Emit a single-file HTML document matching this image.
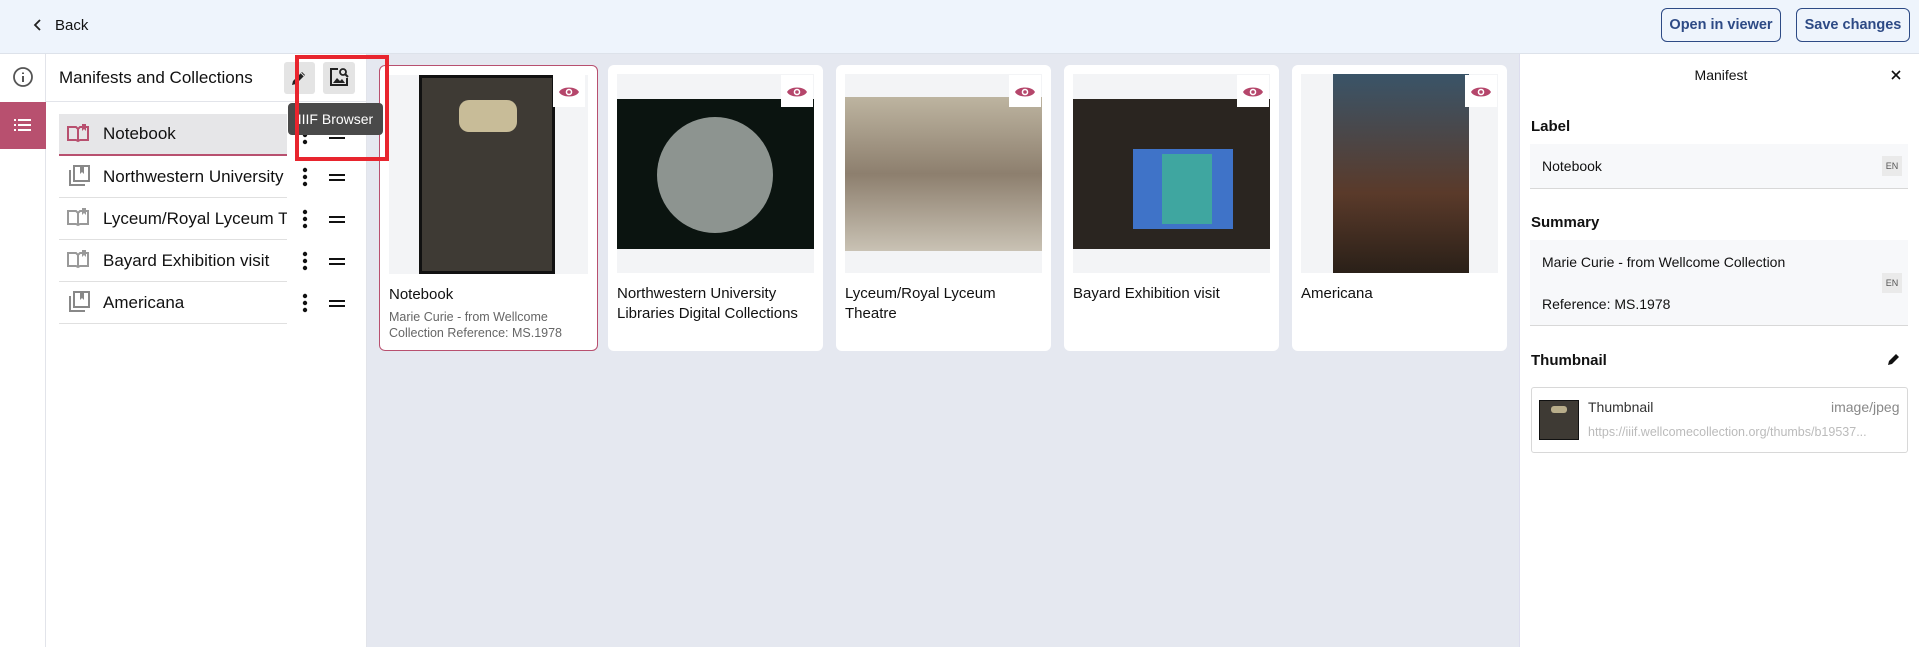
<!DOCTYPE html>
<html><head><meta charset="utf-8"><style>
*{box-sizing:border-box;margin:0;padding:0}
body{width:1919px;height:647px;overflow:hidden;font-family:"Liberation Sans",sans-serif;background:#fff;position:relative;color:#111}
.abs{position:absolute}
.hdr{left:0;top:0;width:1919px;height:54px;background:#eef4fc;border-bottom:1px solid #dde2ea}
.btn{top:8px;height:34px;border:1.5px solid #2d4a85;border-radius:6px;color:#2d4a85;font-weight:bold;font-size:14.5px;display:flex;align-items:center;justify-content:center}
.rail{left:0;top:54px;width:46px;height:593px;border-right:1px solid #e2e4ea}
.side{left:46px;top:54px;width:321px;height:593px;border-right:1px solid #e2e4ea}
.main{left:367px;top:54px;width:1152px;height:593px;background:#e5e8f0}
.right{left:1519px;top:54px;width:400px;height:593px;background:#fff;border-left:1px solid #dde}
.item{left:59px;width:228px;height:42px;border-bottom:1.5px solid #e0e0e0;font-size:17px;display:flex;align-items:center;padding-left:44px;white-space:nowrap;overflow:hidden}
.card{top:65px;width:215px;height:286px;background:#fff;border-radius:6px}
.imgbox{position:absolute;left:9px;top:9px;right:9px;height:199px;background:#f3f4f6;overflow:hidden}
.ct{position:absolute;left:9px;top:219px;right:20px;font-size:15px;line-height:20px}
.fld{left:1530px;width:378px;background:#f7f8fa;border-bottom:1.5px solid #d8d8d8;font-size:14px}
.en{position:absolute;right:6px;width:20px;height:20px;background:#eaeaea;font-size:9px;color:#555;display:flex;align-items:center;justify-content:center}
.lbl{left:1531px;font-size:15px;font-weight:bold}
</style></head><body>
<div class="abs hdr"></div>
<svg class="abs" style="left:33px;top:18px" width="10" height="14" viewBox="0 0 10 14"><path d="M7 2L2 7l5 5" stroke="#222" stroke-width="1.8" fill="none"/></svg>
<div class="abs" style="left:55px;top:17px;font-size:15px">Back</div>
<div class="abs btn" style="left:1661px;width:120px">Open in viewer</div>
<div class="abs btn" style="left:1796px;width:114px">Save changes</div>

<div class="abs rail"></div>
<svg class="abs" style="left:12px;top:66px" width="22" height="22" viewBox="0 0 22 22"><circle cx="11" cy="11" r="9" stroke="#555" stroke-width="1.8" fill="none"/><path d="M11 10v6M11 6.5v1.5" stroke="#555" stroke-width="2"/></svg>
<div class="abs" style="left:0;top:102px;width:46px;height:47px;background:#b8506f"></div>
<svg class="abs" style="left:13px;top:118px" width="20" height="14" viewBox="0 0 20 14"><g fill="#fff"><rect x="1" y="1" width="2" height="2"/><rect x="5" y="1" width="13" height="2"/><rect x="1" y="6" width="2" height="2"/><rect x="5" y="6" width="13" height="2"/><rect x="1" y="11" width="2" height="2"/><rect x="5" y="11" width="13" height="2"/></g></svg>

<div class="abs side"></div>
<div class="abs" style="left:46px;top:101px;width:321px;border-top:1px solid #e2e4ea"></div>
<div class="abs" style="left:59px;top:68px;font-size:17px">Manifests and Collections</div>
<div class="abs" style="left:284px;top:62px;width:31px;height:32px;background:#e4e4e4;border-radius:3px"></div>
<svg class="abs" style="left:289px;top:68px" width="20" height="20" viewBox="0 0 20 20"><path d="M3 17l1-4 9-9 3 3-9 9z" fill="#222"/><path d="M12 5l3 3" stroke="#e4e4e4" stroke-width="1"/></svg>
<div class="abs" style="left:323px;top:62px;width:32px;height:32px;background:#e4e4e4;border-radius:3px"></div>
<svg class="abs" style="left:328px;top:66px" width="22" height="22" viewBox="0 0 22 22"><path d="M10 3H3v16h16v-7" stroke="#222" stroke-width="2" fill="none"/><circle cx="15" cy="6" r="3" stroke="#222" stroke-width="1.8" fill="none"/><path d="M17 8l3 3" stroke="#222" stroke-width="2"/><path d="M5 17l4-5 3 3 2-2 3 4z" fill="#222"/></svg>

<div class="abs item" style="top:114px;background:#e6e6e8;border-bottom:2px solid #b8506f">Notebook</div>
<div class="abs item" style="top:156px">Northwestern University</div>
<div class="abs item" style="top:198px">Lyceum/Royal Lyceum Th</div>
<div class="abs item" style="top:240px">Bayard Exhibition visit</div>
<div class="abs item" style="top:282px">Americana</div>
<svg class="abs" style="left:66px;top:123px" width="24" height="20" viewBox="0 0 24 20"><path d="M2 4h8l2 2 2-2h8v13h-8l-2 1-2-1H2z" stroke="#b8506f" stroke-width="2" fill="none"/><path d="M12 6v11" stroke="#b8506f" stroke-width="2"/><path d="M16 1v7l2-2 2 2V1" fill="#b8506f"/></svg>
<svg class="abs" style="left:68px;top:165px" width="22" height="22" viewBox="0 0 22 22"><path d="M2 5v15h15" stroke="#888" stroke-width="2" fill="none"/><rect x="6" y="1" width="15" height="15" stroke="#888" stroke-width="2" fill="none"/><path d="M12 2v7l2-2 2 2V2" fill="#888"/></svg>
<svg class="abs" style="left:66px;top:207px" width="24" height="20" viewBox="0 0 24 20"><path d="M2 4h8l2 2 2-2h8v13h-8l-2 1-2-1H2z" stroke="#999" stroke-width="2" fill="none"/><path d="M12 6v11" stroke="#999" stroke-width="2"/><path d="M16 1v7l2-2 2 2V1" fill="#999"/></svg>
<svg class="abs" style="left:66px;top:249px" width="24" height="20" viewBox="0 0 24 20"><path d="M2 4h8l2 2 2-2h8v13h-8l-2 1-2-1H2z" stroke="#999" stroke-width="2" fill="none"/><path d="M12 6v11" stroke="#999" stroke-width="2"/><path d="M16 1v7l2-2 2 2V1" fill="#999"/></svg>
<svg class="abs" style="left:68px;top:291px" width="22" height="22" viewBox="0 0 22 22"><path d="M2 5v15h15" stroke="#888" stroke-width="2" fill="none"/><rect x="6" y="1" width="15" height="15" stroke="#888" stroke-width="2" fill="none"/><path d="M12 2v7l2-2 2 2V2" fill="#888"/></svg>
<svg class="abs" style="left:300px;top:123px" width="48" height="190" viewBox="0 0 48 190">
<g fill="#111">
<circle cx="5" cy="5" r="2.2"/><circle cx="5" cy="12" r="2.2"/><circle cx="5" cy="19" r="2.2"/>
<circle cx="5" cy="47" r="2.2"/><circle cx="5" cy="54" r="2.2"/><circle cx="5" cy="61" r="2.2"/>
<circle cx="5" cy="89" r="2.2"/><circle cx="5" cy="96" r="2.2"/><circle cx="5" cy="103" r="2.2"/>
<circle cx="5" cy="131" r="2.2"/><circle cx="5" cy="138" r="2.2"/><circle cx="5" cy="145" r="2.2"/>
<circle cx="5" cy="173" r="2.2"/><circle cx="5" cy="180" r="2.2"/><circle cx="5" cy="187" r="2.2"/>
<rect x="29" y="9" width="16" height="2"/><rect x="29" y="14" width="16" height="2"/>
<rect x="29" y="51" width="16" height="2"/><rect x="29" y="56" width="16" height="2"/>
<rect x="29" y="93" width="16" height="2"/><rect x="29" y="98" width="16" height="2"/>
<rect x="29" y="135" width="16" height="2"/><rect x="29" y="140" width="16" height="2"/>
<rect x="29" y="177" width="16" height="2"/><rect x="29" y="182" width="16" height="2"/>
</g></svg>

<div class="abs main"></div>
<div class="abs card" style="left:379px;width:219px;border:1.5px solid #b8506f"><div class="imgbox"><div class="abs" style="left:30px;top:0;width:136px;height:199px;background:#3e3a34;border:3px solid #111"></div><div class="abs" style="left:70px;top:25px;width:58px;height:32px;background:#c8bc98;border-radius:10px"></div></div><div class="ct">Notebook<div style="color:#666;font-size:12.5px;line-height:16px;margin-top:4px">Marie Curie - from Wellcome Collection Reference: MS.1978</div></div></div>
<div class="abs card" style="left:608px"><div class="imgbox"><div class="abs" style="left:0;top:25px;width:100%;height:150px;background:#0b1410"></div><div class="abs" style="left:40px;top:43px;width:116px;height:116px;border-radius:50%;background:#8d9490"></div></div><div class="ct">Northwestern University Libraries Digital Collections</div></div>
<div class="abs card" style="left:836px"><div class="imgbox"><div class="abs" style="left:0;top:23px;width:100%;height:154px;background:linear-gradient(#bdb4a0,#8d7f6e 50%,#c9c2b4)"></div></div><div class="ct" style="right:40px">Lyceum/Royal Lyceum Theatre</div></div>
<div class="abs card" style="left:1064px"><div class="imgbox"><div class="abs" style="left:0;top:25px;width:100%;height:150px;background:#2a2520"></div><div class="abs" style="left:60px;top:75px;width:100px;height:80px;background:#3f73c8"></div><div class="abs" style="left:89px;top:80px;width:50px;height:70px;background:#3fa6a0"></div></div><div class="ct">Bayard Exhibition visit</div></div>
<div class="abs card" style="left:1292px"><div class="imgbox"><div class="abs" style="left:32px;top:0;width:136px;height:199px;background:linear-gradient(#3a5468,#5a3a2a 60%,#2a2018)"></div></div><div class="ct">Americana</div></div>
<svg width="0" height="0"><defs><g id="e"><path d="M1 9C4 3 18 3 21 9C18 15 4 15 1 9z" fill="#b5466b"/><circle cx="11" cy="9" r="3.3" fill="#fff"/><circle cx="11" cy="9" r="1.8" fill="#b5466b"/></g></defs></svg>
<div class="abs" style="left:553px;top:75px;width:32px;height:32px;background:#fff"></div>
<svg class="abs" style="left:558px;top:83px" width="22" height="18"><use href="#e"/></svg>
<div class="abs" style="left:781px;top:75px;width:32px;height:32px;background:#fff"></div>
<svg class="abs" style="left:786px;top:83px" width="22" height="18"><use href="#e"/></svg>
<div class="abs" style="left:1009px;top:75px;width:32px;height:32px;background:#fff"></div>
<svg class="abs" style="left:1014px;top:83px" width="22" height="18"><use href="#e"/></svg>
<div class="abs" style="left:1237px;top:75px;width:32px;height:32px;background:#fff"></div>
<svg class="abs" style="left:1242px;top:83px" width="22" height="18"><use href="#e"/></svg>
<div class="abs" style="left:1465px;top:75px;width:32px;height:32px;background:#fff"></div>
<svg class="abs" style="left:1470px;top:83px" width="22" height="18"><use href="#e"/></svg>

<div class="abs right"></div>
<div class="abs" style="left:1675px;top:67px;font-size:14px;width:92px;text-align:center">Manifest</div>
<svg class="abs" style="left:1891px;top:70px" width="10" height="10"><path d="M1 1l8 8M9 1L1 9" stroke="#111" stroke-width="1.6"/></svg>
<div class="abs lbl" style="top:118px">Label</div>
<div class="abs fld" style="top:144px;height:45px"><div class="abs" style="left:12px;top:14px">Notebook</div><div class="en" style="top:12px">EN</div></div>
<div class="abs lbl" style="top:214px">Summary</div>
<div class="abs fld" style="top:240px;height:86px"><div class="abs" style="left:12px;top:14px">Marie Curie - from Wellcome Collection</div><div class="abs" style="left:12px;top:56px">Reference: MS.1978</div><div class="en" style="top:33px">EN</div></div>
<div class="abs lbl" style="top:352px">Thumbnail</div>
<svg class="abs" style="left:1887px;top:352px" width="14" height="14"><path d="M1 13l1-4 7-7 3 3-7 7z" fill="#111"/></svg>
<div class="abs" style="left:1531px;top:387px;width:377px;height:66px;border:1.5px solid #d8d8d8;border-radius:3px"></div>
<div class="abs" style="left:1539px;top:400px;width:40px;height:40px;background:#3e3a34;border:1px solid #111"></div>
<div class="abs" style="left:1551px;top:406px;width:16px;height:7px;background:#b8ad8a;border-radius:3px"></div>
<div class="abs" style="left:1588px;top:399px;font-size:14px;color:#333">Thumbnail</div>
<div class="abs" style="left:1831px;top:399px;font-size:14px;color:#888">image/jpeg</div>
<div class="abs" style="left:1588px;top:425px;font-size:12.5px;color:#bbb">https://iiif.wellcomecollection.org/thumbs/b19537...</div>

<div class="abs" style="left:288px;top:103px;width:95px;height:32px;background:#4a4a4a;border-radius:4px;color:#fff;font-size:14px;display:flex;align-items:center;justify-content:center">IIIF Browser</div>
<div class="abs" style="left:295px;top:55px;width:94px;height:106px;border:4px solid #e8252e"></div>
</body></html>
